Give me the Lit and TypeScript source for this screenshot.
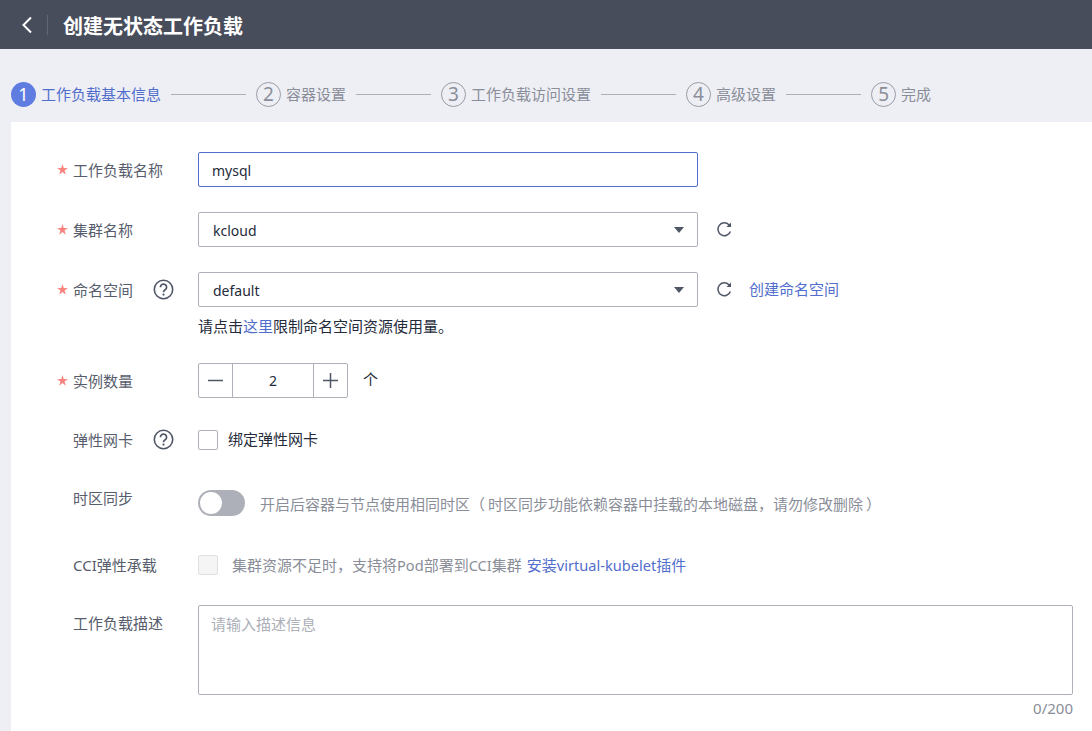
import { LitElement, html, css, svg } from "lit";
import { customElement } from "lit/decorators.js";

const refresh = svg`<svg class="refresh" width="17" height="17" viewBox="0 0 17 17" fill="none"><path d="M14.4 10.4A6.4 6.4 0 1 1 12.9 3.7L14.2 5" stroke="#4f5666" stroke-width="1.5"/><path d="M15 1.4V6H10.4Z" fill="#4f5666"/></svg>`;
const help = svg`<svg width="21" height="21" viewBox="0 0 21 21" fill="none"><circle cx="10.5" cy="10.5" r="9.2" stroke="#4f5666" stroke-width="1.6"/><path d="M7.4 8.2a3.1 3.1 0 1 1 4.8 2.6c-1.1.7-1.7 1.1-1.7 2.4" stroke="#4f5666" stroke-width="1.7"/><circle cx="10.5" cy="15.6" r="1.1" fill="#4f5666"/></svg>`;
const caret = svg`<svg width="10" height="6" viewBox="0 0 10 6"><path d="M0 0H10L5 6Z" fill="#4f5666"/></svg>`;
const star = svg`<svg width="11" height="11" viewBox="0 0 11 11"><path d="M5.5 0L6.7 4.1L11 4.2L7.5 6.6L8.9 10.8L5.5 8.1L2.1 10.8L3.5 6.6L0 4.2L4.3 4.1Z" fill="#f8837e"/></svg>`;

@customElement("app-root")
export class AppRoot extends LitElement {
  static styles = css`
    :host { display: block; width: 1092px; height: 731px; overflow: hidden; background: #eeeff5; font-family: "Noto Sans", "Noto Sans CJK SC", sans-serif; font-size: 15px; color: #252b3a; }
    a { color: #526ecc; text-decoration: none; }
    .latin { font-size: 14.6px; }
    .open { margin-right: 3px; }
    .close { margin-left: 3px; }
    .header { height: 49px; background: #484d5c; display: flex; align-items: center; padding-left: 21px; box-sizing: border-box; }
    .back { display: block; }
    .divider { width: 1px; height: 20px; background: #636775; margin: 0 15px 0 14px; }
    .title { font-size: 20px; font-weight: 700; color: #fff; line-height: 28px; margin-top: 4px; }
    .steps { height: 73px; display: flex; align-items: center; padding: 17px 0 0 11px; box-sizing: border-box; }
    .num { width: 23px; height: 23px; border: 1px solid #9a9ca6; border-radius: 50%; display: flex; align-items: center; justify-content: center; font-size: 19px; color: #8a8e99; flex: none; line-height: 1; }
    .num.on { width: 25px; height: 25px; border: 0; background: #5f7de0; color: #fff; font-size: 18px; }
    .label { margin-left: 5px; color: #8a8e99; white-space: nowrap; position: relative; top: -1px; }
    .label.on { color: #526ecc; }
    .line { width: 75px; height: 1px; background: #adb0b8; margin: 0 10px; flex: none; }
    .card { margin-left: 11px; background: #fff; height: 609px; padding-top: 30px; box-sizing: border-box; }
    .row { display: flex; align-items: center; }
    .name { width: 187px; flex: none; display: flex; align-items: center; color: #575d6c; height: 21px; }
    .star { width: 16px; padding-left: 46px; flex: none; box-sizing: content-box; display: flex; height: 11px; }
    .text { white-space: nowrap; }
    .help { margin-left: 20px; display: flex; }
    .input { width: 500px; height: 35px; box-sizing: border-box; border: 1px solid #adb0b8; border-radius: 2px; display: flex; align-items: center; justify-content: space-between; padding: 0 13px 0 14px; color: #252b3a; font-size: 14px; }
    .input span { position: relative; top: 1px; }
    .input.focus { border-color: #526ecc; padding-left: 13px; }
    .refresh { margin-left: 18px; flex: none; }
    .create { margin-left: 16px; white-space: nowrap; position: relative; top: -1px; }
    .r2 { margin-top: 25px; }
    .hint { margin: 9px 0 0 187px; height: 21px; line-height: 21px; color: #252b3a; }
    .r4 { margin-top: 26px; }
    .stepper { width: 150px; height: 35px; box-sizing: border-box; border: 1px solid #adb0b8; border-radius: 2px; display: flex; }
    .stepbtn { width: 33px; display: flex; align-items: center; justify-content: center; flex: none; }
    .stepval { flex: 1; text-align: center; line-height: 33px; font-size: 14px; border-left: 1px solid #adb0b8; border-right: 1px solid #adb0b8; }
    .unit { margin-left: 15px; position: relative; top: -2px; }
    .r5 { margin-top: 31px; }
    .check { width: 20px; height: 20px; box-sizing: border-box; border: 1px solid #adb0b8; border-radius: 2px; flex: none; background: #fff; }
    .check.off { border-color: #dfe1e6; background: #f5f5f6; }
    .checktext { margin-left: 10px; white-space: nowrap; position: relative; top: -1px; }
    .r6 { margin-top: 40px; height: 26px; }
    .r6 .name { position: relative; top: -6px; }
    .switch { width: 47px; height: 26px; border-radius: 13px; background: #adb0b8; position: relative; flex: none; }
    .knob { width: 22px; height: 22px; border-radius: 50%; background: #fff; position: absolute; left: 2px; top: 2px; }
    .muted { color: #8a8e99; white-space: nowrap; }
    .sw-text { margin-left: 15px; }
    .r7 { margin-top: 38px; height: 21px; }
    .cci-text { margin-left: 14px; }
    .install { margin-left: 5px; white-space: nowrap; }
    .desc { margin-top: 30px; display: flex; align-items: flex-start; }
    .descname { width: 187px; flex: none; padding: 8px 0 0 62px; box-sizing: border-box; color: #575d6c; line-height: 21px; }
    .area-wrap { width: 875px; flex: none; }
    .area { height: 90px; box-sizing: border-box; border: 1px solid #adb0b8; border-radius: 2px; padding: 8px 13px 8px 12px; line-height: 21px; color: #adb0b8; }
    .count { text-align: right; color: #8a8e99; margin-top: 3px; line-height: 21px; }
  `;

  private step(n: number, label: string, on = false, last = false) {
    return html`<div class="num ${on ? "on" : ""}">${n}</div><span class="label ${on ? "on" : ""}">${label}</span>${last ? "" : html`<div class="line"></div>`}`;
  }

  private name(label: string, required = true, q = false) {
    return html`<div class="name"><span class="star">${required ? star : ""}</span><span class="text">${label}</span>${q ? html`<span class="help">${help}</span>` : ""}</div>`;
  }

  render() {
    return html`
      <div class="header">
        <svg class="back" width="12" height="18" viewBox="0 0 12 18" fill="none"><path d="M10 1.5L2.5 9L10 16.5" stroke="#fff" stroke-width="2"/></svg>
        <div class="divider"></div>
        <div class="title">创建无状态工作负载</div>
      </div>
      <div class="steps">
        ${this.step(1, "工作负载基本信息", true)}
        ${this.step(2, "容器设置")}
        ${this.step(3, "工作负载访问设置")}
        ${this.step(4, "高级设置")}
        ${this.step(5, "完成", false, true)}
      </div>
      <div class="card">
        <div class="row">${this.name("工作负载名称")}<div class="input focus"><span>mysql</span></div></div>
        <div class="row r2">${this.name("集群名称")}<div class="input"><span>kcloud</span>${caret}</div>${refresh}</div>
        <div class="row r2">${this.name("命名空间", true, true)}<div class="input"><span>default</span>${caret}</div>${refresh}<a class="create">创建命名空间</a></div>
        <div class="hint">请点击<a>这里</a>限制命名空间资源使用量。</div>
        <div class="row r4">${this.name("实例数量")}
          <div class="stepper">
            <div class="stepbtn"><svg width="15" height="15" viewBox="0 0 15 15"><path d="M0 7.5H15" stroke="#4f5666" stroke-width="1.5"/></svg></div>
            <div class="stepval">2</div>
            <div class="stepbtn"><svg width="15" height="15" viewBox="0 0 15 15"><path d="M0 7.5H15M7.5 0V15" stroke="#4f5666" stroke-width="1.5"/></svg></div>
          </div>
          <span class="unit">个</span>
        </div>
        <div class="row r5">${this.name("弹性网卡", false, true)}<div class="check"></div><span class="checktext">绑定弹性网卡</span></div>
        <div class="row r6">${this.name("时区同步", false)}<div class="switch"><div class="knob"></div></div><span class="muted sw-text">开启后容器与节点使用相同时区<span class="open">（</span>时区同步功能依赖容器中挂载的本地磁盘，请勿修改删除<span class="close">）</span></span></div>
        <div class="row r7">${this.name("CCI弹性承载", false)}<div class="check off"></div><span class="muted cci-text">集群资源不足时，支持将<span class="latin">Pod</span>部署到<span class="latin">CCI</span>集群</span><a class="install">安装<span class="latin">virtual-kubelet</span>插件</a></div>
        <div class="desc"><div class="descname">工作负载描述</div>
          <div class="area-wrap"><div class="area">请输入描述信息</div><div class="count">0/200</div></div>
        </div>
      </div>
    `;
  }
}
